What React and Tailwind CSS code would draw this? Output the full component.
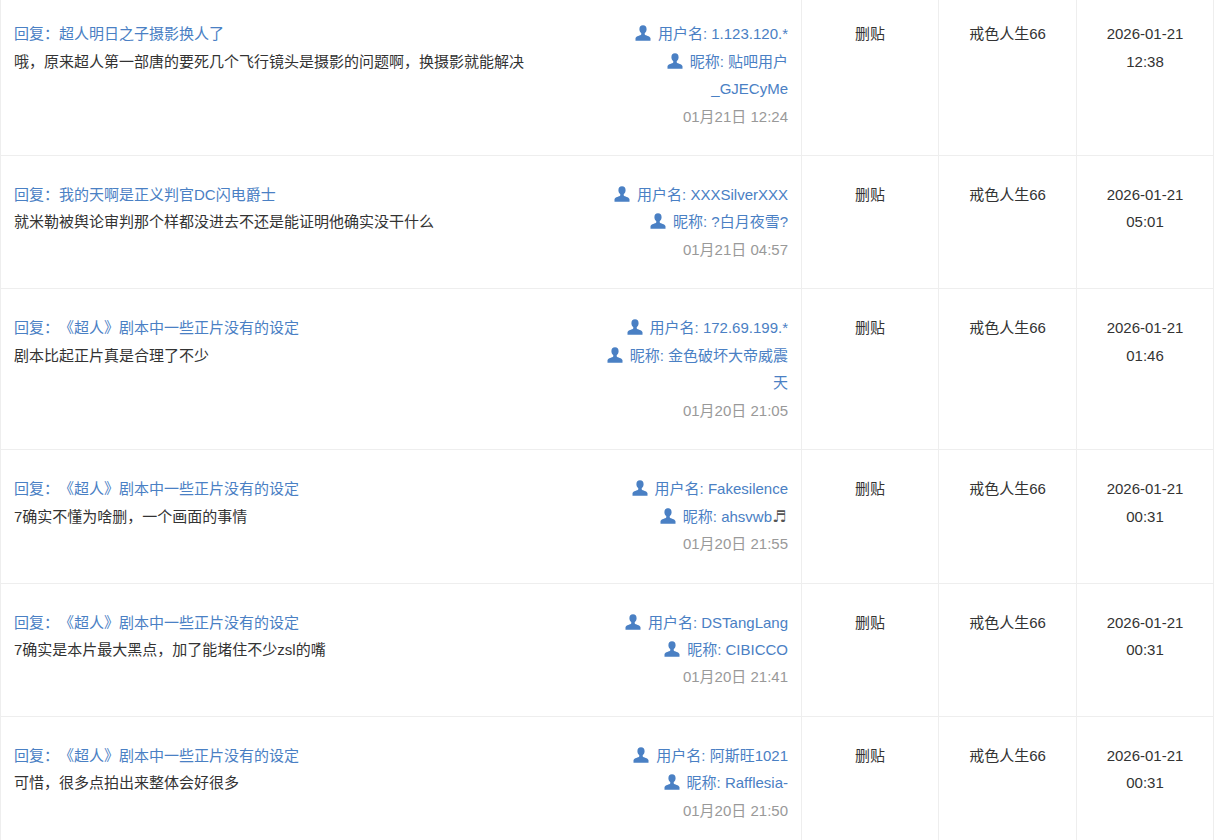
const rows = [
  { title: '回复：超人明日之子摄影换人了', body: '哦，原来超人第一部唐的要死几个飞行镜头是摄影的问题啊，换摄影就能解决', user: '1.123.120.*', nick: '贴吧用户_GJECyMe', at: '01月21日 12:24', d: '2026-01-21', t: '12:38' },
  { title: '回复：我的天啊是正义判官DC闪电爵士', body: '就米勒被舆论审判那个样都没进去不还是能证明他确实没干什么', user: 'XXXSilverXXX', nick: '?白月夜雪?', at: '01月21日 04:57', d: '2026-01-21', t: '05:01' },
  { title: '回复：《超人》剧本中一些正片没有的设定', body: '剧本比起正片真是合理了不少', user: '172.69.199.*', nick: '金色破坏大帝威震天', at: '01月20日 21:05', d: '2026-01-21', t: '01:46' },
  { title: '回复：《超人》剧本中一些正片没有的设定', body: '7确实不懂为啥删，一个画面的事情', user: 'Fakesilence', nick: 'ahsvwb', note: true, at: '01月20日 21:55', d: '2026-01-21', t: '00:31' },
  { title: '回复：《超人》剧本中一些正片没有的设定', body: '7确实是本片最大黑点，加了能堵住不少zsl的嘴', user: 'DSTangLang', nick: 'CIBICCO', at: '01月20日 21:41', d: '2026-01-21', t: '00:31' },
  { title: '回复：《超人》剧本中一些正片没有的设定', body: '可惜，很多点拍出来整体会好很多', user: '阿斯旺1021', nick: 'Rafflesia-', at: '01月20日 21:50', d: '2026-01-21', t: '00:31' },
];

function UserIcon() {
  return (
    <svg viewBox="0 0 16 16" className="inline-block w-4 h-4 mr-[7px] align-[-2px] fill-[#4a80c4]">
      <path d="M8 0.3C5.6 0.3 4.4 1.9 4.4 4.2c0 1.5 .7 3 1.7 3.9 .3 .4 .3 1 .1 1.4C5.5 10.6 1.1 11 .5 13.2V15.7H15.5V13.2C14.9 11 10.5 10.6 9.8 9.5 9.6 9.1 9.6 8.5 9.9 8.1 10.9 7.2 11.6 5.7 11.6 4.2 11.6 1.9 10.4 0.3 8 0.3Z" />
    </svg>
  );
}

export default function App() {
  return (
    <div className="bg-white h-[840px] overflow-hidden font-['Liberation_Sans','Noto_Sans_CJK_SC',sans-serif] text-[15px] leading-[27.45px] text-[#333] [text-spacing-trim:space-all]">
      <table className="table-fixed border-collapse w-[1214px] -mt-[5.8px]">
        <tbody>
          {rows.map((r, i) => (
            <tr key={i} className="border border-[#eee]">
              <td className="w-[801px] border-r border-[#eee] px-[13px] py-[25px] align-top">
                <div className="flex justify-between">
                  <div>
                    <a className="text-[#4a80c4] block">{r.title}</a>
                    <div>{r.body}</div>
                  </div>
                  <div className="w-[190px] shrink-0 text-right text-[#4a80c4]">
                    <div><UserIcon />用户名: {r.user}</div>
                    <div>
                      <UserIcon />昵称: {r.nick}
                      {r.note && <span className="inline-block w-4 text-left text-[#555] font-['DejaVu_Sans'] text-[16px] leading-[20px]">♬</span>}
                    </div>
                    <div className="text-[#999]">{r.at}</div>
                  </div>
                </div>
              </td>
              <td className="w-[137px] border-r border-[#eee] px-3 py-[25px] align-top text-center">删贴</td>
              <td className="w-[138px] border-r border-[#eee] px-3 py-[25px] align-top text-center">戒色人生66</td>
              <td className="px-3 py-[25px] align-top text-center">
                <div className="w-[100px] mx-auto">{r.d} {r.t}</div>
              </td>
            </tr>
          ))}
        </tbody>
      </table>
    </div>
  );
}
